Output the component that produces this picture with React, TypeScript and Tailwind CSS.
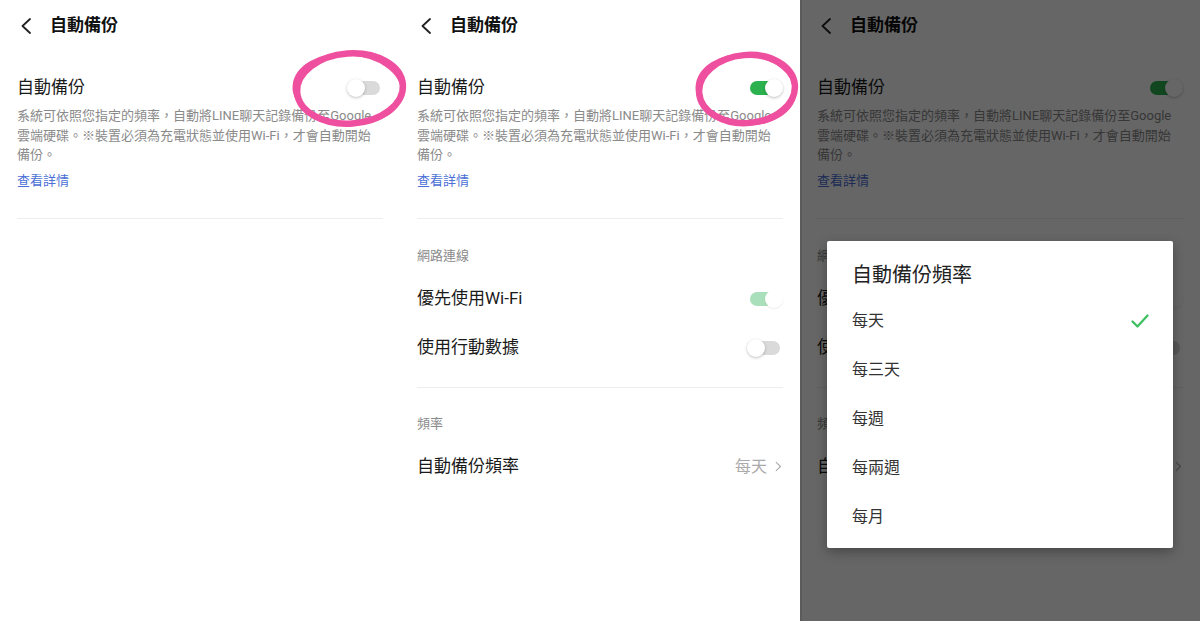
import clsx from "clsx";

const font = "font-['Roboto','Noto_Sans_CJK_TC',sans-serif]";

function Toggle({ on, dim }: { on: boolean; dim?: boolean }) {
  return (
    <div className="relative w-[36px] h-[18px] shrink-0">
      <div
        className={clsx(
          "absolute left-[3px] right-[3px] top-[2px] h-[14px] rounded-full",
          on ? (dim ? "bg-[#a9dfba]" : "bg-[#2bb24f]") : "bg-[#dadada]"
        )}
      />
      <div
        className={clsx(
          "absolute top-0 size-[18px] rounded-full bg-white",
          dim ? "shadow-[0_1px_2px_rgba(0,0,0,0.08)]" : "shadow-[0_1px_3px_rgba(0,0,0,0.25)]",
          on ? "right-0" : "left-0"
        )}
      />
    </div>
  );
}

function Chevron({ className }: { className?: string }) {
  return (
    <svg viewBox="0 0 12 16" className={className} fill="none">
      <polyline points="10,1 2.5,8 10,15" stroke="currentColor" strokeWidth="1.8" strokeLinecap="round" strokeLinejoin="round" />
    </svg>
  );
}

// one phone screen of the auto-backup settings
function Screen({ enabled }: { enabled: boolean }) {
  return (
    <div className="w-[400px] h-[621px] bg-white shrink-0 pt-[2px]">
      <div className="h-[48px] flex items-center pl-[20px]">
        <Chevron className="w-[12px] h-[16px] text-[#222]" />
        <span className="ml-[18px] text-[17px] font-bold text-[#111]">自動備份</span>
      </div>
      <div className="px-[17px]">
        <div className="mt-[26px] h-[24px] flex items-center justify-between">
          <span className="text-[17px] text-[#1a1a1a]">自動備份</span>
          <Toggle on={enabled} />
        </div>
        <p className="mt-[6px] text-[13px] leading-[19.5px] text-[#8a8a8a]">
          系統可依照您指定的頻率，自動將LINE聊天記錄備份至Google雲端硬碟。※裝置必須為充電狀態並使用Wi-Fi，才會自動開始備份。
        </p>
        <p className="mt-[6.5px] text-[13px] leading-[19.5px] text-[#4b6fd6]">查看詳情</p>
        <div className="mt-[27px] h-px bg-[#ededed]" />
        {enabled && (
          <>
            <p className="mt-[27px] text-[13px] leading-[20px] text-[#8a8a8a]">網路連線</p>
            <div className="mt-[8.5px]">
              <div className="h-[49px] flex items-center justify-between">
                <span className="text-[17px] text-[#1a1a1a]">優先使用Wi-Fi</span>
                <Toggle on dim />
              </div>
              <div className="h-[49px] flex items-center justify-between">
                <span className="text-[17px] text-[#1a1a1a]">使用行動數據</span>
                <Toggle on={false} />
              </div>
            </div>
            <div className="mt-[14.5px] h-px bg-[#ededed]" />
            <p className="mt-[26px] text-[13px] leading-[20px] text-[#8a8a8a]">頻率</p>
            <div className="mt-[8.5px] h-[49px] flex items-center justify-between">
              <span className="text-[17px] text-[#1a1a1a]">自動備份頻率</span>
              <div className="flex items-center gap-[8px] pr-[1px]">
                <span className="text-[16px] text-[#aaaaaa]">每天</span>
                <Chevron className="w-[7px] h-[11px] text-[#aaaaaa] rotate-180" />
              </div>
            </div>
          </>
        )}
      </div>
    </div>
  );
}

const options = ["每天", "每三天", "每週", "每兩週", "每月"];

export default function App() {
  return (
    <div className={clsx("relative flex w-[1200px] h-[621px] overflow-hidden bg-white", font)}>
      <Screen enabled={false} />
      <Screen enabled />
      <div className="relative">
        <Screen enabled />
        <div className="absolute inset-0 bg-black/60 border-l-2 border-black/10">
          <div className="absolute left-[25px] top-[241px] w-[346px] h-[307px] bg-white rounded-[2px] shadow-[0_4px_12px_rgba(0,0,0,0.3)] pl-[25px] pr-[24px] pt-[20px]">
            <p className="text-[20px] leading-[28px] text-[#222]">自動備份頻率</p>
            <ul className="mt-[7.5px]">
              {options.map((o, i) => (
                <li key={o} className="h-[49px] flex items-center justify-between text-[16px] text-[#333]">
                  <span>{o}</span>
                  {i === 0 && (
                    <svg viewBox="0 0 18 15" className="w-[18px] h-[15px]" fill="none">
                      <polyline points="1.5,7.5 6.5,12.5 16.5,1.5" stroke="#3cbf5f" strokeWidth="2.2" strokeLinecap="round" strokeLinejoin="round" />
                    </svg>
                  )}
                </li>
              ))}
            </ul>
          </div>
        </div>
      </div>

      {/* hand-drawn pink marks around the toggles */}
      <svg className="absolute inset-0 pointer-events-none" width="1200" height="621" fill="none">
        <g stroke="#ef4f9f" strokeLinecap="round">
          <ellipse cx="350" cy="88.5" rx="53" ry="35" strokeWidth="6.5" transform="rotate(-4 350 88.5)" />
          <ellipse cx="348" cy="89" rx="54" ry="35" strokeWidth="3" transform="rotate(3 348 89)" />
          <ellipse cx="747" cy="89" rx="48" ry="34" strokeWidth="6.5" transform="rotate(-5 747 89)" />
          <ellipse cx="746" cy="89.5" rx="49" ry="34.5" strokeWidth="3" transform="rotate(3 746 89.5)" />
        </g>
      </svg>
    </div>
  );
}
